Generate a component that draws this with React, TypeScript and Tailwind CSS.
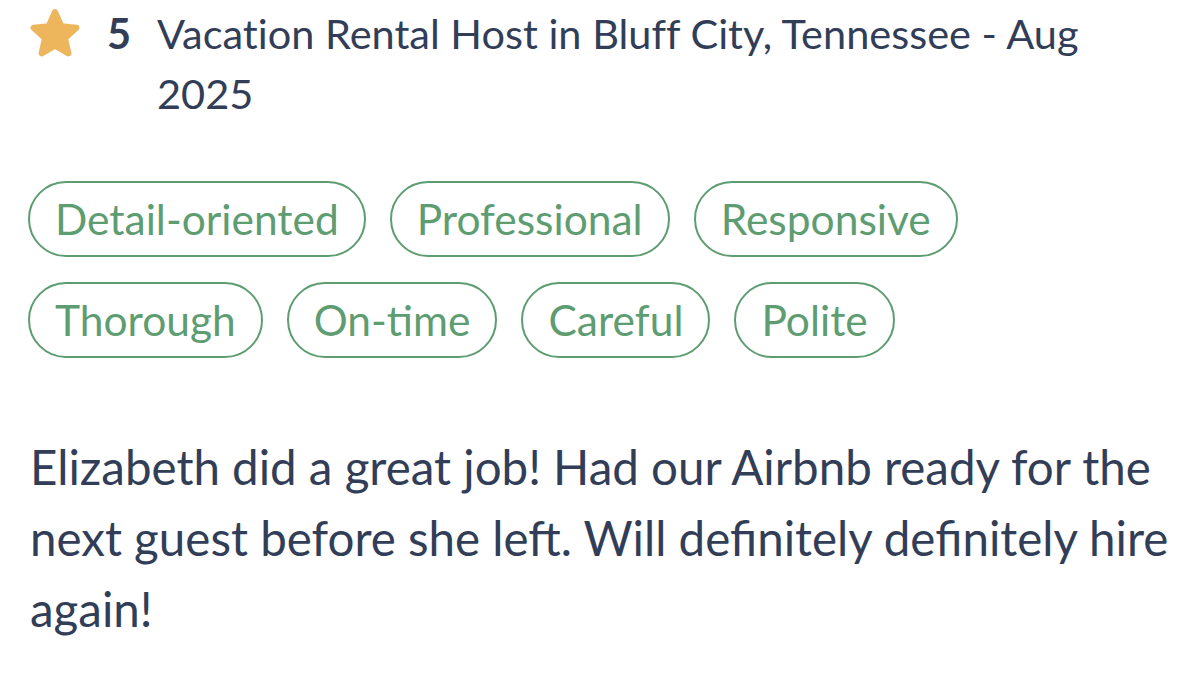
import React from 'react';

const tags = [
  ['Detail-oriented', 'Professional', 'Responsive'],
  ['Thorough', 'On-time', 'Careful', 'Polite'],
];

const StarIcon = () => (
  <svg viewBox="0 0 50 48" className="w-[52px] h-[50px]">
    <path
      d="M25 4 L31 17.5 L45.5 19 L34.5 29 L37.8 43.5 L25 36 L12.2 43.5 L15.5 29 L4.5 19 L19 17.5 Z"
      fill="#eeb65c"
      stroke="#eeb65c"
      strokeWidth="6"
      strokeLinejoin="round"
    />
  </svg>
);

const App: React.FC = () => {
  return (
    <div className="min-h-[674px] w-[1187px] bg-white font-['Lato',sans-serif] text-[#323e57] overflow-hidden">
      {/* Header */}
      <div className="flex items-start pt-[3px] [font-variant-ligatures:none]">
        <div className="w-[107px] pl-[29px] pt-[5px] shrink-0">
          <StarIcon />
        </div>
        <span className="w-[50px] shrink-0 text-[41.5px] leading-[60px] font-bold">5</span>
        <p className="text-[41.5px] leading-[60px] pr-[30px]">
          Vacation Rental Host in Bluff City, Tennessee - Aug 2025
        </p>
      </div>

      {/* Tags */}
      <div className="mt-[58px] pl-[28px] flex flex-col gap-[25px]">
        {tags.map((row, i) => (
          <div key={i} className="flex gap-[24px]">
            {row.map((t) => (
              <span
                key={t}
                className="border-2 border-[#5e9d71] text-[#5e9d71] rounded-full px-[25px] py-[11px] text-[42.5px] leading-[50px]"
              >
                {t}
              </span>
            ))}
          </div>
        ))}
      </div>

      {/* Body */}
      <p className="mt-[73px] pl-[30px] pr-[8px] text-[47.5px] leading-[71px]">
        Elizabeth did a great job! Had our Airbnb ready for the next guest before she left. Will definitely definitely hire again!
      </p>
    </div>
  );
};

export default App;
